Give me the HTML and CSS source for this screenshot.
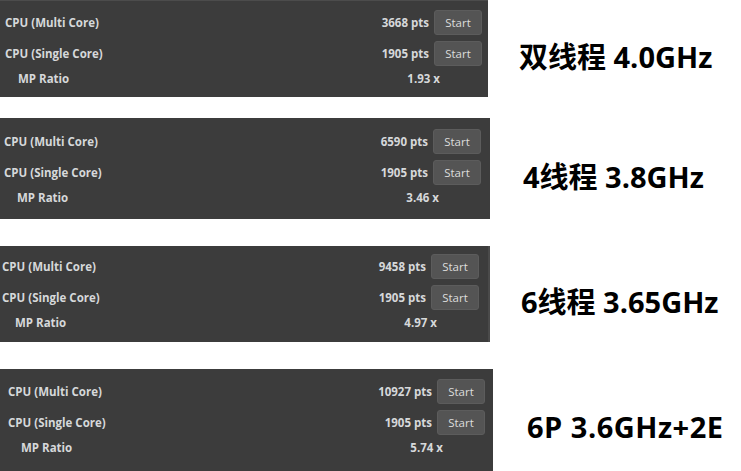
FILE: index.html
```html
<!DOCTYPE html>
<html lang="zh-CN">
<head>
    <meta charset="UTF-8">
    <title>Cinebench 对比</title>
    <link rel="stylesheet" href="styles.css">
</head>
<body>
    <div class="sheet">
        <div class="entry entry-1">
            <div class="panel">
                <div class="row">
                    <span class="label">CPU (Multi Core)</span>
                    <span class="score">3668 pts</span>
                    <button class="start-btn">Start</button>
                </div>
                <div class="row">
                    <span class="label">CPU (Single Core)</span>
                    <span class="score">1905 pts</span>
                    <button class="start-btn">Start</button>
                </div>
                <div class="row ratio">
                    <span class="label">MP Ratio</span>
                    <span class="score">1.93 x</span>
                </div>
            </div>
            <div class="caption">双线程 4.0GHz</div>
        </div>

        <div class="entry entry-2">
            <div class="panel">
                <div class="row">
                    <span class="label">CPU (Multi Core)</span>
                    <span class="score">6590 pts</span>
                    <button class="start-btn">Start</button>
                </div>
                <div class="row">
                    <span class="label">CPU (Single Core)</span>
                    <span class="score">1905 pts</span>
                    <button class="start-btn">Start</button>
                </div>
                <div class="row ratio">
                    <span class="label">MP Ratio</span>
                    <span class="score">3.46 x</span>
                </div>
            </div>
            <div class="caption">4线程 3.8GHz</div>
        </div>

        <div class="entry entry-3">
            <div class="panel">
                <div class="row">
                    <span class="label">CPU (Multi Core)</span>
                    <span class="score">9458 pts</span>
                    <button class="start-btn">Start</button>
                </div>
                <div class="row">
                    <span class="label">CPU (Single Core)</span>
                    <span class="score">1905 pts</span>
                    <button class="start-btn">Start</button>
                </div>
                <div class="row ratio">
                    <span class="label">MP Ratio</span>
                    <span class="score">4.97 x</span>
                </div>
            </div>
            <div class="caption">6线程 3.65GHz</div>
        </div>

        <div class="entry entry-4">
            <div class="panel">
                <div class="row">
                    <span class="label">CPU (Multi Core)</span>
                    <span class="score">10927 pts</span>
                    <button class="start-btn">Start</button>
                </div>
                <div class="row">
                    <span class="label">CPU (Single Core)</span>
                    <span class="score">1905 pts</span>
                    <button class="start-btn">Start</button>
                </div>
                <div class="row ratio">
                    <span class="label">MP Ratio</span>
                    <span class="score">5.74 x</span>
                </div>
            </div>
            <div class="caption">6P 3.6GHz+2E</div>
        </div>
    </div>
</body>
</html>
```

FILE: styles.css
```css
body {
    margin: 0;
    background: #ffffff;
    font-family: 'Open Sans', 'Noto Sans', sans-serif;
    height: 471px;
    overflow: hidden;
}
.sheet {
    display: flex;
    flex-direction: column;
}
.entry {
    display: flex;
    align-items: center;
}
/* Result panels */
.panel {
    background: #3c3c3c;
    box-sizing: border-box;
    width: 488px;
    padding: 10px 6px 0 5px;
    display: flex;
    flex-direction: column;
    gap: 6px;
}
.row {
    display: flex;
    align-items: center;
    height: 25px;
    color: #d6d8da;
    font-size: 11.5px;
    font-weight: 700;
}
.row .label {
    flex: 1;
}
.row .score {
    margin-right: 5px;
}
.row.ratio {
    height: 20px;
    margin-top: -4px;
}
.row.ratio .label {
    padding-left: 13px;
}
.row.ratio .score {
    margin-right: 42px;
}
.start-btn {
    width: 48px;
    height: 25px;
    padding: 0;
    background: #545454;
    border: 1px solid #5c5c5c;
    border-radius: 3px;
    color: #dcdcdc;
    font-family: 'Open Sans', 'Noto Sans', sans-serif;
    font-size: 11.5px;
}
/* Per-panel crop offsets */
.entry-1 .panel {
    height: 97px;
    border-top: 1px solid #4c4c4c;
    padding-top: 9px;
}
.entry-2 {
    margin-top: 21px;
}
.entry-2 .panel {
    width: 490px;
    height: 101px;
    padding: 11px 9px 0 4px;
}
.entry-3 {
    margin-top: 27px;
}
.entry-3 .panel {
    width: 490px;
    height: 96px;
    padding: 8px 9px 0 2px;
    border-right: 2px solid #4a4a4a;
}
.entry-4 {
    margin-top: 27px;
}
.entry-4 .panel {
    width: 493px;
    height: 102px;
    padding: 10px 8px 0 8px;
}
/* Side labels */
.caption {
    margin-left: 31px;
    padding-top: 12px;
    font-family: 'Open Sans', 'Noto Sans CJK SC', sans-serif;
    font-size: 29px;
    font-weight: 700;
    color: #000000;
    white-space: nowrap;
}
.entry-2 .caption {
    margin-left: 33px;
}
.entry-4 .caption {
    margin-left: 34px;
    letter-spacing: 0.5px;
}
```
